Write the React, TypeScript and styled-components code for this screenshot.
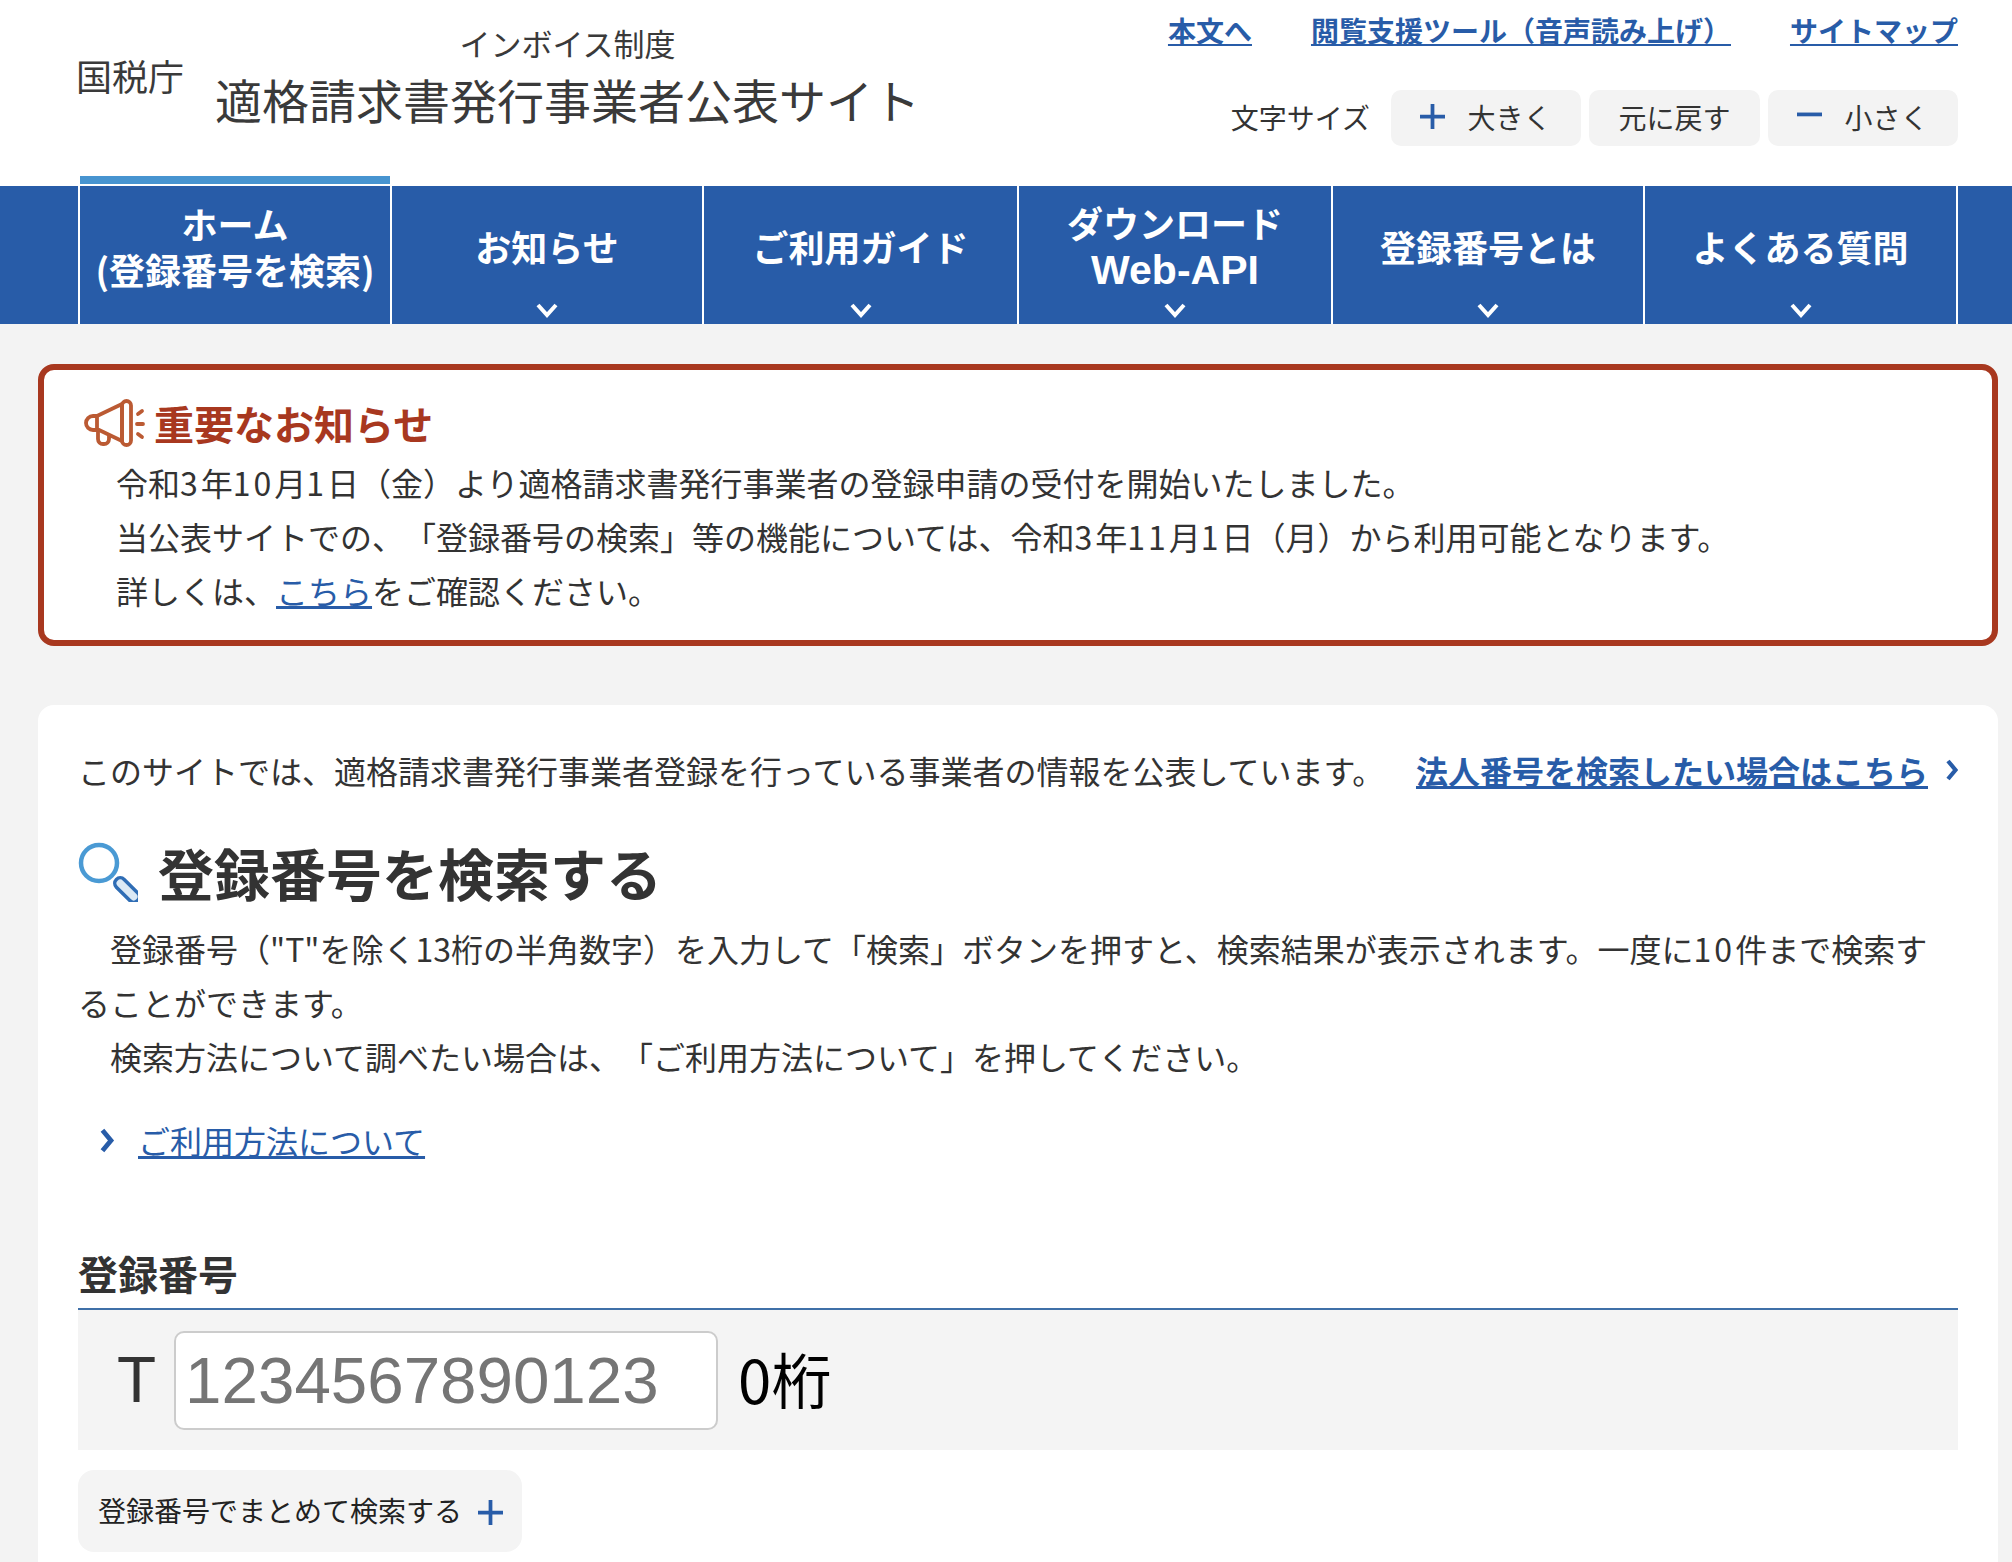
import React from "react";
import styled, { createGlobalStyle } from "styled-components";

const FONT = `"Noto Sans CJK JP", "Liberation Sans", sans-serif`;
const BLUE = "#285ca8";
const RED = "#a8381f";

const GlobalStyle = createGlobalStyle`
    html, body {
        margin: 0;
        padding: 0;
        background: #f3f3f3;
    }
    * {
        box-sizing: border-box;
    }
`;

const Page = styled.div`
    height: 1562px;
    overflow: hidden;
    font-family: ${FONT};
    color: #333;
    background: #f3f3f3;
    text-spacing-trim: space-all;
`;

// Header
const Header = styled.header`
    height: 186px;
    background: #fff;
    display: flex;
    justify-content: space-between;
    padding: 0 54px 0 76px;
`;

const Logo = styled.div`
    display: flex;
    align-items: flex-start;
    gap: 31px;
    padding-top: 23px;
    color: #3a3a3a;
`;

const Agency = styled.div`
    font-size: 36px;
    line-height: 44px;
    margin-top: 30px;
`;

const LogoTitle = styled.div`
    display: flex;
    flex-direction: column;
    align-items: center;
`;

const LogoSub = styled.div`
    font-size: 31px;
    line-height: 40px;
`;

const LogoMain = styled.div`
    font-size: 47px;
    line-height: 60px;
    margin-top: 6px;
`;

const HeaderRight = styled.div`
    display: flex;
    flex-direction: column;
    align-items: flex-end;
    padding-top: 8px;
`;

const TopLinks = styled.nav`
    display: flex;
    gap: 59px;
`;

const TopLink = styled.a`
    font-size: 28px;
    line-height: 44px;
    font-weight: 700;
    color: ${BLUE};
    text-decoration: underline;
`;

const SizeRow = styled.div`
    display: flex;
    align-items: center;
    gap: 8px;
    margin-top: 38px;
`;

const SizeLabel = styled.span`
    font-size: 28px;
    color: #333;
    margin: 0 13px 3px 0;
`;

const SizeButton = styled.button<{ $w: number }>`
    width: ${(p) => p.$w}px;
    height: 56px;
    border: none;
    border-radius: 10px;
    background: #f3f3f3;
    font-family: ${FONT};
    font-size: 28px;
    color: #333;
    display: flex;
    align-items: center;
    justify-content: center;
    gap: 22px;
    padding: 0 0 3px;
`;

// Global nav
const Nav = styled.nav`
    height: 138px;
    background: ${BLUE};
    padding: 0 54px 0 78px;
    display: grid;
    grid-template-columns: 312px 312px 315px 314px 312px 1fr;
`;

const NavItem = styled.a<{ $last?: boolean }>`
    position: relative;
    border-left: 2px solid #fff;
    border-right: ${(p) => (p.$last ? "2px solid #fff" : "none")};
    color: #fff;
    font-size: 36px;
    font-weight: 700;
    line-height: 46px;
    text-align: center;
    display: flex;
    align-items: center;
    justify-content: center;
    padding-bottom: 19px;
`;

const NavLatin = styled.span`
    font-family: "Liberation Sans", sans-serif;
    font-size: 41px;
`;

const ActiveBar = styled.span`
    position: absolute;
    top: -10px;
    left: 0;
    right: 0;
    height: 8px;
    background: #4794d0;
`;

const NavChevron = styled.svg`
    position: absolute;
    left: 50%;
    bottom: 6px;
    width: 24px;
    height: 16px;
    margin-left: -12px;
`;

// Notice
const Main = styled.main`
    padding: 40px 14px 0 38px;
`;

const Notice = styled.section`
    height: 282px;
    border: 6px solid ${RED};
    border-radius: 16px;
    background: #fff;
    padding: 26px 40px 0 40px;
`;

const NoticeTitle = styled.h2`
    margin: 0 0 5px;
    display: flex;
    align-items: center;
    gap: 9px;
    font-size: 40px;
    line-height: 54px;
    font-weight: 700;
    color: ${RED};
`;

const NoticeLine = styled.p`
    margin: 0;
    padding-left: 32px;
    font-size: 32px;
    line-height: 54px;
    color: #333;
`;

const Num = styled.span`
    letter-spacing: 3px;
`;

const TextLink = styled.a`
    color: ${BLUE};
    text-decoration: underline;
`;

// Search card
const Card = styled.section`
    margin-top: 59px;
    background: #fff;
    border-radius: 16px;
    padding: 38px 40px 40px 40px;
`;

const IntroRow = styled.div`
    display: flex;
    justify-content: space-between;
    align-items: center;
    font-size: 32px;
    line-height: 54px;
`;

const IntroLink = styled.a`
    display: flex;
    align-items: center;
    gap: 18px;
    font-weight: 700;
    color: ${BLUE};
    span {
        text-decoration: underline;
    }
`;

const SearchTitle = styled.h1`
    margin: 39px 0 13px;
    display: flex;
    align-items: center;
    gap: 20px;
    font-size: 56px;
    line-height: 72px;
    font-weight: 700;
    color: #333;
`;

const Body = styled.p`
    margin: 0;
    font-size: 32px;
    line-height: 54px;
    color: #333;
`;

const Indent = styled.span`
    padding-left: 32px;
`;

const GuideLink = styled.div`
    display: flex;
    align-items: center;
    gap: 23px;
    margin: 30px 0 0 21px;
    font-size: 32px;
    line-height: 54px;
`;

const FieldLabel = styled.h3`
    margin: 76px 0 0;
    font-size: 40px;
    line-height: 60px;
    font-weight: 700;
    color: #333;
    border-bottom: 2px solid #3f70a8;
    padding-bottom: 5px;
`;

const FieldBox = styled.div`
    height: 140px;
    background: #f4f4f4;
    display: flex;
    align-items: center;
    padding-left: 39px;
`;

const Prefix = styled.span`
    font-family: "Liberation Sans", sans-serif;
    font-size: 64px;
    color: #333;
    margin-right: 18px;
`;

const NumberInput = styled.input`
    width: 544px;
    height: 99px;
    border: 2px solid #ccc;
    border-radius: 10px;
    background: #fff;
    padding: 0 9px;
    font-family: "Liberation Sans", sans-serif;
    font-size: 65.5px;
    &::placeholder {
        color: #757575;
        opacity: 1;
    }
`;

const DigitCount = styled.span`
    font-size: 60px;
    color: #000;
    margin: 0 0 6px 20px;
`;

const BulkButton = styled.button`
    margin-top: 20px;
    width: 444px;
    height: 82px;
    border: none;
    border-radius: 16px;
    background: #f4f4f4;
    font-family: ${FONT};
    font-size: 28px;
    color: #222;
    display: flex;
    align-items: center;
    gap: 16px;
    padding: 0 0 3px 20px;
    svg {
        margin-top: 6px;
    }
`;

const ChevronDown = () => (
    <NavChevron viewBox="0 0 24 16" fill="none">
        <polyline points="3,3 12,13 21,3" stroke="#fff" strokeWidth="4" />
    </NavChevron>
);

const ChevronRight = ({ w, h }: { w: number; h: number }) => (
    <svg width={w} height={h} viewBox="0 0 12 22" fill="none">
        <polyline points="2,2 9.5,11 2,20" stroke={BLUE} strokeWidth="4.2" />
    </svg>
);

const PlusIcon = () => (
    <svg width="25" height="25" viewBox="0 0 24 24" fill="none">
        <path d="M12 0V24M0 12H24" stroke={BLUE} strokeWidth="3.6" />
    </svg>
);

const MinusIcon = () => (
    <svg width="25" height="25" viewBox="0 0 24 24" fill="none">
        <path d="M0 10H24" stroke={BLUE} strokeWidth="3.6" />
    </svg>
);

const MegaphoneIcon = () => (
    <svg width="61" height="48" viewBox="8 4 61 48" fill="none" stroke="#bb5a33" strokeWidth="3.8" strokeLinejoin="round">
        <path d="M21 21H17a6.5 6.5 0 0 0 0 14H21" />
        <path d="M21 21L46 9V46L21 34Z" />
        <rect x="46" y="6" width="9" height="44" rx="4.5" />
        <path d="M22 35V44a5 5 0 0 0 5 5h1a5 5 0 0 0 5-5V39" />
        <path d="M62 19l4-3M61 29h6M62 39l4 3" strokeLinecap="round" />
    </svg>
);

const MagnifierIcon = () => (
    <svg width="60" height="60" viewBox="6 4 60 60" fill="none">
        <circle cx="27" cy="25" r="18" stroke="#4a9ad4" strokeWidth="4.5" />
        <rect x="-5.5" y="-15" width="11" height="30" rx="5.5" transform="translate(55 52) rotate(-45)" stroke="#2f6db5" strokeWidth="3.5" fill="#dbe9f5" />
    </svg>
);

const NAV_ITEMS: { label: React.ReactNode[]; active?: boolean }[] = [
    { label: ["ホーム", "(登録番号を検索)"], active: true },
    { label: ["お知らせ"] },
    { label: ["ご利用ガイド"] },
    { label: ["ダウンロード", <NavLatin>Web-API</NavLatin>] },
    { label: ["登録番号とは"] },
    { label: ["よくある質問"] },
];

const App: React.FC = () => {
    return (
        <Page>
            <GlobalStyle />
            <Header>
                <Logo>
                    <Agency>国税庁</Agency>
                    <LogoTitle>
                        <LogoSub>インボイス制度</LogoSub>
                        <LogoMain>適格請求書発行事業者公表サイト</LogoMain>
                    </LogoTitle>
                </Logo>
                <HeaderRight>
                    <TopLinks>
                        <TopLink>本文へ</TopLink>
                        <TopLink>閲覧支援ツール（音声読み上げ）</TopLink>
                        <TopLink>サイトマップ</TopLink>
                    </TopLinks>
                    <SizeRow>
                        <SizeLabel>文字サイズ</SizeLabel>
                        <SizeButton $w={190}>
                            <PlusIcon />
                            大きく
                        </SizeButton>
                        <SizeButton $w={171}>元に戻す</SizeButton>
                        <SizeButton $w={190}>
                            <MinusIcon />
                            小さく
                        </SizeButton>
                    </SizeRow>
                </HeaderRight>
            </Header>

            <Nav>
                {NAV_ITEMS.map((item, i) => (
                    <NavItem key={i} $last={i === NAV_ITEMS.length - 1}>
                        {item.active && <ActiveBar />}
                        <div>
                            {item.label.map((line, j) => (
                                <div key={j}>{line}</div>
                            ))}
                        </div>
                        {!item.active && <ChevronDown />}
                    </NavItem>
                ))}
            </Nav>

            <Main>
                <Notice>
                    <NoticeTitle>
                        <MegaphoneIcon />
                        重要なお知らせ
                    </NoticeTitle>
                    <NoticeLine>
                        令和<Num>3</Num>年<Num>10</Num>月<Num>1</Num>日（金）より適格請求書発行事業者の登録申請の受付を開始いたしました。
                    </NoticeLine>
                    <NoticeLine>
                        当公表サイトでの、「登録番号の検索」等の機能については、令和<Num>3</Num>年<Num>11</Num>月<Num>1</Num>日（月）から利用可能となります。
                    </NoticeLine>
                    <NoticeLine>
                        詳しくは、<TextLink>こちら</TextLink>をご確認ください。
                    </NoticeLine>
                </Notice>

                <Card>
                    <IntroRow>
                        このサイトでは、適格請求書発行事業者登録を行っている事業者の情報を公表しています。
                        <IntroLink>
                            <span>法人番号を検索したい場合はこちら</span>
                            <ChevronRight w={12} h={22} />
                        </IntroLink>
                    </IntroRow>

                    <SearchTitle>
                        <MagnifierIcon />
                        登録番号を検索する
                    </SearchTitle>
                    <Body>
                        <Indent />
                        登録番号（"T"を除く13桁の半角数字）を入力して「検索」ボタンを押すと、検索結果が表示されます。一度に<Num>10</Num>件まで検索す
                        <br />
                        ることができます。
                    </Body>
                    <Body>
                        <Indent />
                        検索方法について調べたい場合は、「ご利用方法について」を押してください。
                    </Body>
                    <GuideLink>
                        <ChevronRight w={16} h={25} />
                        <TextLink>ご利用方法について</TextLink>
                    </GuideLink>

                    <FieldLabel>登録番号</FieldLabel>
                    <FieldBox>
                        <Prefix>T</Prefix>
                        <NumberInput placeholder="1234567890123" />
                        <DigitCount>0桁</DigitCount>
                    </FieldBox>
                    <BulkButton>
                        登録番号でまとめて検索する
                        <PlusIcon />
                    </BulkButton>
                </Card>
            </Main>
        </Page>
    );
};

export default App;
